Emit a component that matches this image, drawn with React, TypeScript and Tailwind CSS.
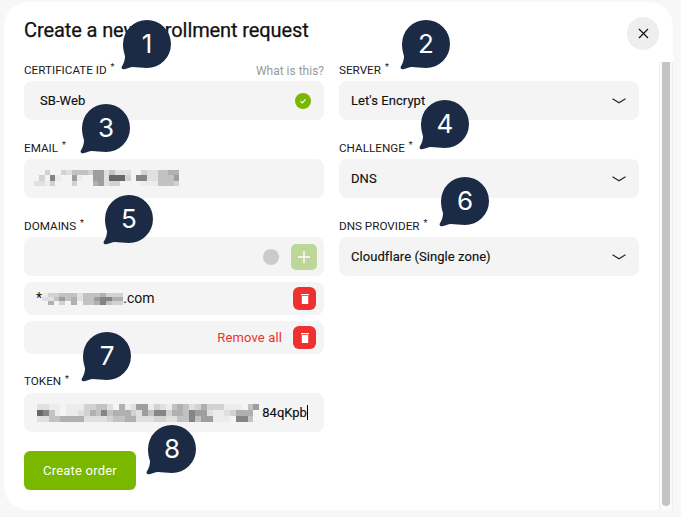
import type { ReactNode } from 'react';

const shades: Record<string, string> = {
  a: '#ececec',
  b: '#e0e0e0',
  c: '#d2d2d2',
  d: '#c2c2c2',
  e: '#b0b0b0',
  f: '#9e9e9e',
  g: '#858585',
  h: '#686868',
};

const emailRows = [
  '..c..cbdddcffbdbbb..cbbddee',
  '.c.ga..fa..ffbhhhc.ggbbdddf',
  'bbac...c...efbcc....aaadddc',
];
const domainRows = ['accdddbdddeccc', 'bbdfdebddfggee', '.e.c.e.ddegdcc'];
const tokenRows = [
  'bbaa.aaaccddb.eabffacbadedbcecccaaa.df',
  'hgda.aabcedgdeeecbfdggceedgffbaabceee.',
  'bbddeeeebbbbcddeebbbccbbddgdffaaa.ggd.',
];

function Mosaic({ rows, cell, height }: { rows: string[]; cell: number; height: number }) {
  return (
    <svg
      width={rows[0].length * cell}
      height={rows.length * height}
      shapeRendering="crispEdges"
      className="shrink-0"
    >
      {rows.map((row, y) =>
        row.split('').map((c, x) =>
          shades[c] ? (
            <rect key={`${x}-${y}`} x={x * cell} y={y * height} width={cell} height={height} fill={shades[c]} />
          ) : null,
        ),
      )}
    </svg>
  );
}

function Bubble({ n, className }: { n: number; className: string }) {
  return (
    <div className={`absolute h-[50px] w-[52px] ${className}`}>
      <svg width="52" height="50" viewBox="0 0 52 50" className="block">
        <path
          d="M26 0a24 24 0 0 1 0 48c-5 0-10-1-14-1-3 0-6 2-9 2.2-2 .2-3-1.5-2-3 2-3 3-7 3-10-1-4-2-7-2-12A24 24 0 0 1 26 0z"
          fill="#1c2b45"
        />
      </svg>
      <span className="absolute top-0 left-[2px] flex h-[46px] w-12 items-center justify-center font-['Inter',sans-serif] text-[26px] text-white">
        {n}
      </span>
    </div>
  );
}

function Label({ text, aside, tall }: { text: string; aside?: string; tall?: boolean }) {
  return (
    <div className={`flex items-center justify-between pb-[2px] ${tall ? 'h-[20px]' : 'h-[19px]'}`}>
      <span className="text-[11.7px] text-[#1a1a1a]">
        {text} <sup className="-top-[0.4em] ml-px text-[9px]">*</sup>
      </span>
      {aside && <span className="text-[12px] text-[#9a9a9a]">{aside}</span>}
    </div>
  );
}

function Select({ label, value }: { label: string; value: string }) {
  return (
    <div>
      <Label text={label} />
      <div className="flex h-[39px] items-center justify-between rounded-lg bg-[#f4f4f4] pr-[13px] pl-3">
        <span className="text-[13px] tracking-[0.005em] text-[#111] [-webkit-text-stroke:0.15px_#111]">{value}</span>
        <svg width="14" height="6" viewBox="0 0 14 6" fill="none" stroke="#222" strokeWidth="1.1">
          <path d="M.5.8 7 4.8 13.5.8" />
        </svg>
      </div>
    </div>
  );
}

function Field({ children, className }: { children: ReactNode; className: string }) {
  return <div className={`flex h-[39px] items-center rounded-lg bg-[#f4f4f4] ${className}`}>{children}</div>;
}

function TrashButton() {
  return (
    <button className="flex h-[23px] w-[23px] items-center justify-center rounded-md bg-[#ee3030]">
      <svg width="8" height="10" viewBox="0 0 8 10" fill="#fff">
        <path d="M0 0h8v1.2H0zM.8 2h6.4v8H.8z" />
      </svg>
    </button>
  );
}

export default function App() {
  return (
    <div className="relative h-[517px] w-[681px] overflow-hidden bg-[#f7f7f7] pt-[2px] pl-1 font-['Roboto',sans-serif]">
      <div className="h-[508px] w-[669px] rounded-t-[24px] rounded-bl-[24px] bg-white">
        <div className="flex h-[60px] items-start justify-between pr-[14px] pl-5">
          <h1 className="mt-[15px] text-[20px] leading-[26px] font-normal tracking-[-0.005em] text-[#111] [-webkit-text-stroke:0.25px_#111]">
            Create a new enrollment request
          </h1>
          <button className="mt-[15px] flex h-[33px] w-8 items-center justify-center rounded-full bg-[#eeeeee]">
            <svg width="11" height="11" viewBox="0 0 11 11" fill="none" stroke="#111" strokeWidth="1.2">
              <path d="m1 1 9 9M10 1l-9 9" />
            </svg>
          </button>
        </div>

        <div className="flex h-[448px]">
          <div className="grid w-[655px] grid-cols-[300px_300px] items-start gap-x-[15px] pl-5">
            <div className="flex flex-col">
              <Label text="CERTIFICATE ID" aside="What is this?" />
              <Field className="justify-between pr-[13px] pl-4">
                <span className="text-[13px] tracking-[0.005em] text-[#111] [-webkit-text-stroke:0.15px_#111]">SB-Web</span>
                <span className="flex h-4 w-4 items-center justify-center rounded-full bg-[#7ab800]">
                  <svg width="8" height="8" viewBox="0 0 8 8" fill="none" stroke="#fff" strokeWidth="1.1">
                    <path d="m1.5 4.2 1.8 1.7 3.2-3.6" />
                  </svg>
                </span>
              </Field>

              <div className="mt-5">
                <Label text="EMAIL" />
                <Field className="pl-[10px]">
                  <Mosaic rows={emailRows} cell={5.37} height={5.34} />
                </Field>
              </div>

              <div className="mt-5">
                <Label text="DOMAINS" />
                <Field className="justify-end gap-3 pr-[7px]">
                  <span className="h-4 w-4 rounded-full bg-[#cbcbcb]" />
                  <button className="flex h-[26px] w-[26px] items-center justify-center rounded-[5px] bg-[#bdd79b]">
                    <svg width="12" height="12" viewBox="0 0 12 12" stroke="#fff" strokeWidth="1.4">
                      <path d="M6 0v12M0 6h12" />
                    </svg>
                  </button>
                </Field>
              </div>

              <div className="mt-[6px] flex h-[33px] items-center justify-between rounded-lg bg-[#f4f4f4] pr-2 pl-3">
                <span className="flex items-center text-[14px] text-[#111]">
                  *
                  <Mosaic rows={domainRows} cell={5.8} height={4} />
                  .com
                </span>
                <TrashButton />
              </div>

              <div className="mt-[6px] flex h-[33px] items-center justify-end gap-[11px] rounded-lg bg-[#f4f4f4] pr-2">
                <span className="text-[13px] tracking-[0.01em] text-[#ee3030]">Remove all</span>
                <TrashButton />
              </div>

              <div className="mt-[19px]">
                <Label text="TOKEN" tall />
                <Field className="pl-[13px]">
                  <Mosaic rows={tokenRows} cell={5.85} height={6} />
                  <span className="ml-[3px] text-[13px] text-[#111] [-webkit-text-stroke:0.15px_#111]">84qKpb</span>
                  <span className="h-[15px] w-px bg-black" />
                </Field>
              </div>

              <button className="mt-[19px] h-[39px] w-28 rounded-md bg-[#7ab800] text-[13px] tracking-[0.015em] text-white">
                Create order
              </button>
            </div>

            <div className="flex flex-col gap-5">
              <Select label="SERVER" value="Let's Encrypt" />
              <Select label="CHALLENGE" value="DNS" />
              <Select label="DNS PROVIDER" value="Cloudflare (Single zone)" />
            </div>
          </div>

          <div className="flex h-full w-[14px] justify-center border-x border-[#eeeeee] bg-[#fafafa]">
            <div className="h-[444px] w-2 rounded-b-[4px] bg-[#c4c4c4]" />
          </div>
        </div>
      </div>

      <Bubble n={1} className="top-[20px] left-[121px]" />
      <Bubble n={2} className="top-[20px] left-[400px]" />
      <Bubble n={3} className="top-[104px] left-[80px]" />
      <Bubble n={4} className="top-[100px] left-[419px]" />
      <Bubble n={5} className="top-[195px] left-[103px]" />
      <Bubble n={6} className="top-[177px] left-[439px]" />
      <Bubble n={7} className="top-[332px] left-[81px]" />
      <Bubble n={8} className="top-[425px] left-[146px]" />
    </div>
  );
}
